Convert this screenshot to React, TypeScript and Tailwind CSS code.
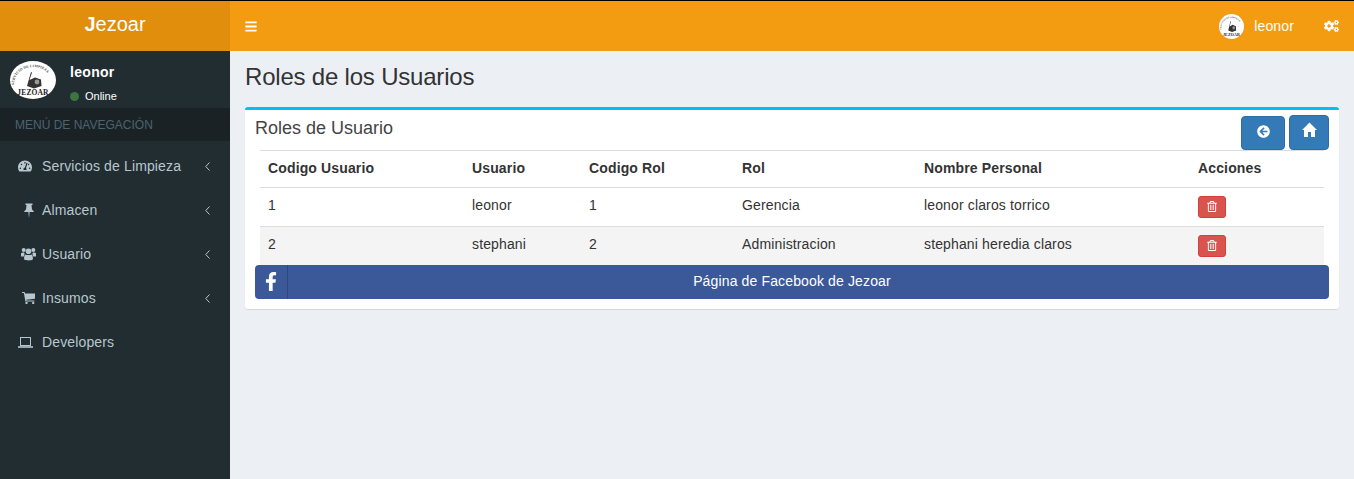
import type { ReactNode } from "react";
import {
  FaArrowCircleLeft,
  FaBars,
  FaCogs,
  FaFacebookF,
  FaRegTrashAlt,
  FaTachometerAlt,
} from "react-icons/fa";

function PinIcon() {
  return (
    <svg viewBox="0 0 10 15" className="ml-[24px] h-[15px] w-[10px]" fill="currentColor">
      <path d="M1.5 0.5H8.5V2H7.5L8 6.5C9 7.2 9.7 8 10 9H5.6L5.1 14.5H4.9L4.4 9H0C0.3 8 1 7.2 2 6.5L2.5 2H1.5Z" />
    </svg>
  );
}

function UsersIcon() {
  return (
    <svg viewBox="0 0 15 14" className="ml-[21px] h-[14px] w-[15px]" fill="currentColor">
      <circle cx="2.7" cy="3" r="2" />
      <circle cx="12.3" cy="3" r="2" />
      <circle cx="7.5" cy="4.2" r="2.8" />
      <path d="M0 6.2C1 5.4 2.5 5.4 3.6 6 3.4 7.4 3.2 8.5 2.8 9.5H0Z" />
      <path d="M15 6.2C14 5.4 12.5 5.4 11.4 6 11.6 7.4 11.8 8.5 12.2 9.5H15Z" />
      <path d="M4 7.4C5.8 8.2 9.2 8.2 11 7.4 11.9 9 12 11 11.8 12.6 10 13.8 5 13.8 3.2 12.6 3 11 3.1 9 4 7.4Z" />
    </svg>
  );
}

function CartIcon() {
  return (
    <svg viewBox="0 0 13 12" className="ml-[22px] h-[12px] w-[13px]" fill="currentColor">
      <path d="M0 0H2.6L3 1.5H13V6.8L4.2 7.8L4.4 8.6H12.4V9.6H3.4L1.9 1H0Z" />
      <rect x="3.5" y="10" width="2" height="2" />
      <rect x="10.2" y="10" width="2" height="2" />
    </svg>
  );
}

function LaptopIcon() {
  return (
    <svg viewBox="0 0 15 11" className="ml-[18px] h-[11px] w-[15px]" fill="none" stroke="currentColor">
      <rect x="2.5" y="0.5" width="10" height="8" />
      <path d="M0 10H15" strokeWidth="1.6" />
    </svg>
  );
}

function HomeIcon() {
  return (
    <svg viewBox="0 0 15 15" className="mb-[6px] h-[15px] w-[15px]" fill="currentColor">
      <path d="M7.5 0.5L15 8H13V15H9V10H6V15H2V8H0Z" />
    </svg>
  );
}

function AngleIcon() {
  return (
    <svg viewBox="0 0 5 9" className="mr-[3px] h-[9px] w-[5px]" fill="none" stroke="currentColor">
      <path d="M4.5 0.5L0.8 4.5L4.5 8.5" />
    </svg>
  );
}

const menu: { label: string; icon: ReactNode; arrow: boolean }[] = [
  { label: "Servicios de Limpieza", icon: <FaTachometerAlt className="ml-[18px] h-[14px] w-[14px]" />, arrow: true },
  { label: "Almacen", icon: <PinIcon />, arrow: true },
  { label: "Usuario", icon: <UsersIcon />, arrow: true },
  { label: "Insumos", icon: <CartIcon />, arrow: true },
  { label: "Developers", icon: <LaptopIcon />, arrow: false },
];

const rows = [
  { id: "1", user: "leonor", rolId: "1", rol: "Gerencia", name: "leonor claros torrico" },
  { id: "2", user: "stephani", rolId: "2", rol: "Administracion", name: "stephani heredia claros" },
];

function Logo({ className, arcId }: { className: string; arcId: string }) {
  return (
    <svg viewBox="0 0 46 38" preserveAspectRatio="none" className={className}>
      <ellipse cx="23" cy="19" rx="23" ry="19" fill="#fff" />
      <defs>
        <path id={arcId} d="M4 24 C4 0 42 0 42 24" />
      </defs>
      <text fontSize="3.6" fontWeight="700" fill="#444" fontFamily="Liberation Serif, serif">
        <textPath href={`#${arcId}`}>SERVICIO DE LIMPIEZA</textPath>
      </text>
      <path d="M17 25L21 11L22 11.4L19.5 19L25 16.5L31 18.5L31.5 25L24 27.5Z" fill="#333" />
      <circle cx="27" cy="21" r="2.4" fill="#999" />
      <text x="23" y="34" textAnchor="middle" fontSize="7.5" fontWeight="700" fill="#222" fontFamily="Liberation Serif, serif">
        JEZOAR
      </text>
    </svg>
  );
}

export default function App() {
  return (
    <div className="flex h-[479px] w-[1354px] flex-col overflow-hidden bg-[#ecf0f5] font-['Liberation_Sans',Arial,sans-serif] text-[14px] tracking-[0.14px] text-[#333]">
      <div className="h-px shrink-0 bg-black" />
      <header className="flex h-[50px] shrink-0 bg-[#f39c12] text-white">
        <div className="flex w-[230px] shrink-0 items-center justify-center bg-[#e08e0b] pb-1 text-[20px] tracking-normal">
          <b>J</b>ezoar
        </div>
        <div className="flex flex-1 items-center justify-between pl-[15px] pr-[15px]">
          <FaBars className="h-[13px] w-[12px]" />
          <div className="flex items-center">
            <Logo className="h-[25px] w-[25px]" arcId="logo-arc-top" />
            <span className="ml-[10px] mr-[30px]">leonor</span>
            <FaCogs className="h-[14px] w-[15px]" />
          </div>
        </div>
      </header>

      <div className="flex min-h-0 flex-1">
        <aside className="w-[230px] shrink-0 bg-[#222d32]">
          <div className="flex h-[57px] items-center pl-[10px]">
            <Logo className="h-[38px] w-[46px]" arcId="logo-arc-side" />
            <div className="ml-[14px] pt-[9px] text-white">
              <div className="font-bold leading-[14px] tracking-[0.3px]">leonor</div>
              <div className="mt-[10px] flex items-center text-[11px] leading-[14px] tracking-normal">
                <span className="mr-[6px] h-[9px] w-[9px] rounded-full bg-[#3c763d]" />
                Online
              </div>
            </div>
          </div>
          <div className="h-[33px] bg-[#1a2226] pl-[15px] pt-[10px] text-[12px] leading-[14px] tracking-normal text-[#4b646f]">
            MENÚ DE NAVEGACIÓN
          </div>
          <nav className="pt-[3px]">
            {menu.map((item) => (
              <div key={item.label} className="flex h-[44px] items-center pr-[17px] text-[#b8c7ce]">
                <span className="flex w-[42px] shrink-0 items-center">{item.icon}</span>
                <span className="flex-1">{item.label}</span>
                {item.arrow && <AngleIcon />}
              </div>
            ))}
          </nav>
        </aside>

        <main className="flex-1 px-[15px]">
          <h1 className="pt-[11px] text-[24px] leading-[30px] tracking-[-0.2px]">Roles de los Usuarios</h1>
          <section className="mt-[15px] h-[202px] rounded-[3px] border-t-[3px] border-[#00c0ef] bg-white pl-[10px] pr-[10px] shadow-[0_1px_1px_rgba(0,0,0,0.1)]">
            <div className="flex h-[40px] justify-between">
              <h3 className="pt-[5px] text-[18px] leading-[26px] tracking-normal text-[#444]">Roles de Usuario</h3>
              <div className="flex items-start gap-[4px] pt-[5px]">
                <button className="mt-px flex h-[34px] w-[44px] items-center justify-center rounded-[4px] border border-[#2e6da4] bg-[#337ab7] text-white">
                  <FaArrowCircleLeft className="mb-[3px] h-[13px] w-[13px]" />
                </button>
                <button className="flex h-[35px] w-[40px] items-center justify-center rounded-[4px] border border-[#2e6da4] bg-[#337ab7] text-white">
                  <HomeIcon />
                </button>
              </div>
            </div>

            <div className="px-[5px]">
              <table className="w-[1064px] table-fixed border-collapse text-left">
                <thead>
                  <tr className="h-[37px] border-y border-[#ddd]">
                    <th className="w-[204px] px-[8px] pb-[2px]">Codigo Usuario</th>
                    <th className="w-[117px] px-[8px] pb-[2px]">Usuario</th>
                    <th className="w-[153px] px-[8px] pb-[2px]">Codigo Rol</th>
                    <th className="w-[182px] px-[8px] pb-[2px]">Rol</th>
                    <th className="w-[274px] px-[8px] pb-[2px]">Nombre Personal</th>
                    <th className="px-[8px] pb-[2px]">Acciones</th>
                  </tr>
                </thead>
                <tbody>
                  {rows.map((row, i) => (
                    <tr key={row.id} className={i === 0 ? "h-[39px] border-b border-[#ddd]" : "h-[38px] bg-[#f4f4f4]"}>
                      <td className="px-[8px] pb-[3px]">{row.id}</td>
                      <td className="px-[8px] pb-[3px]">{row.user}</td>
                      <td className="px-[8px] pb-[3px]">{row.rolId}</td>
                      <td className="px-[8px] pb-[3px]">{row.rol}</td>
                      <td className="px-[8px] pb-[3px]">{row.name}</td>
                      <td className="px-[8px]">
                        <button className="flex h-[22px] w-[28px] items-center justify-center rounded-[3px] border border-[#d43f3a] bg-[#d9534f] text-white">
                          <FaRegTrashAlt className="mb-px h-[11px] w-[10px]" />
                        </button>
                      </td>
                    </tr>
                  ))}
                </tbody>
              </table>
            </div>

            <div className="flex h-[34px] w-[1074px] items-center rounded-[4px] bg-[#3b5998] text-white">
              <span className="flex h-[34px] w-[33px] shrink-0 items-center justify-center border-r border-[#2f4779]">
                <FaFacebookF className="h-[19px] w-[12px]" />
              </span>
              <span className="flex-1 pr-[33px] text-center">Página de Facebook de Jezoar</span>
            </div>
          </section>
        </main>
      </div>
    </div>
  );
}
